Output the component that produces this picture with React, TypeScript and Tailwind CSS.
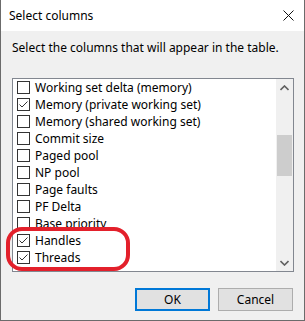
const columns: { label: string; checked: boolean }[] = [
  { label: 'Working set delta (memory)', checked: false },
  { label: 'Memory (private working set)', checked: true },
  { label: 'Memory (shared working set)', checked: false },
  { label: 'Commit size', checked: false },
  { label: 'Paged pool', checked: false },
  { label: 'NP pool', checked: false },
  { label: 'Page faults', checked: false },
  { label: 'PF Delta', checked: false },
  { label: 'Base priority', checked: false },
  { label: 'Handles', checked: true },
  { label: 'Threads', checked: true },
];

function CheckBox({ checked }: { checked: boolean }) {
  return (
    <div className="w-[13px] h-[13px] border border-[#333333] bg-white flex items-center justify-center shrink-0">
      {checked && (
        <svg width="11" height="11" viewBox="0 0 11 11">
          <path d="M1.5 5.5 L4 8 L9.5 2.5" fill="none" stroke="#333333" strokeWidth="1" />
        </svg>
      )}
    </div>
  );
}

export default function App() {
  return (
    <div
      className="relative w-[305px] h-[321px] border-x border-b border-[#6b6b6b] bg-[#f0f0f0] flex flex-col text-[12px] text-black"
      style={{ fontFamily: '"Segoe UI", "Noto Sans", "Liberation Sans", sans-serif' }}
    >
      {/* title bar */}
      <div className="h-[31px] bg-white flex items-center justify-between pl-[8px] pr-[10px] shrink-0">
        <span className="text-[12px]">Select columns</span>
        <svg width="11" height="11" viewBox="0 0 11 11">
          <path d="M0.5 0.5 L10.5 10.5 M10.5 0.5 L0.5 10.5" stroke="#111" strokeWidth="1" />
        </svg>
      </div>

      {/* body */}
      <div className="flex flex-col px-[11px] pt-[9px]">
        <div className="h-[16px] leading-[16px]">Select the columns that will appear in the table.</div>

        <div className="mt-[22px] w-[282px] h-[194px] border border-[#828790] bg-white flex">
          <div className="flex-1 flex flex-col pt-[0px]">
            {columns.map((c) => (
              <div key={c.label} className="h-[17px] flex items-center pl-[4px] gap-[5px]">
                <CheckBox checked={c.checked} />
                <span className="leading-[17px] whitespace-nowrap">{c.label}</span>
              </div>
            ))}
          </div>
          <div className="w-[17px] bg-[#f0f0f0] flex flex-col items-center">
            <div className="h-[17px] flex items-center justify-center">
              <svg width="9" height="6" viewBox="0 0 9 6">
                <path d="M0.5 5 L4.5 1 L8.5 5" fill="none" stroke="#606060" strokeWidth="1.6" />
              </svg>
            </div>
            <div className="mt-[39px] w-[15px] h-[41px] bg-[#cdcdcd]" />
            <div className="flex-1" />
            <div className="h-[17px] flex items-center justify-center">
              <svg width="9" height="6" viewBox="0 0 9 6">
                <path d="M0.5 1 L4.5 5 L8.5 1" fill="none" stroke="#606060" strokeWidth="1.6" />
              </svg>
            </div>
          </div>
        </div>

        <div className="mt-[16px] flex justify-end gap-[8px] pr-[0px]">
          <button className="w-[75px] h-[23px] border-2 border-[#0078d7] bg-[#e1e1e1] text-[12px] leading-none">
            OK
          </button>
          <button className="w-[75px] h-[23px] border border-[#adadad] bg-[#e1e1e1] text-[12px] leading-none">
            Cancel
          </button>
        </div>
      </div>

      {/* hand-drawn highlight */}
      <div className="absolute left-[5px] top-[227px] w-[124px] h-[44px] border-[4px] border-[#e3202b] rounded-[16px]" />
    </div>
  );
}
